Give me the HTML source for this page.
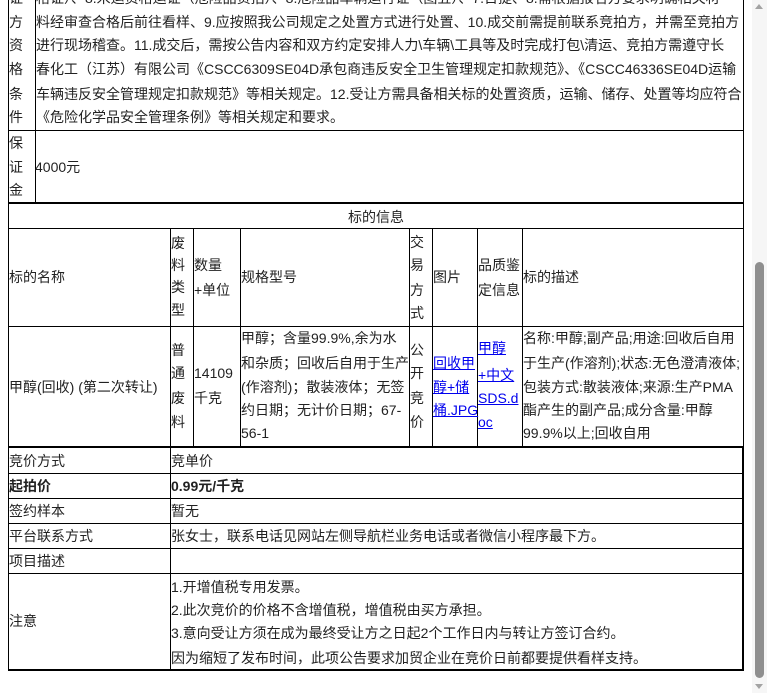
<!DOCTYPE html>
<html><head><meta charset="utf-8"><style>
body{margin:0;width:767px;height:693px;overflow:hidden;background:#fff;position:relative;font-family:"Liberation Sans","Noto Sans CJK SC",sans-serif;font-size:14px;color:#222}
.h{position:absolute;height:1px;background:#000}
.v{position:absolute;width:1px;background:#000}
.t{position:absolute;line-height:24px;white-space:nowrap}
a{color:#00e;text-decoration:underline}
</style></head><body>
<!-- top section -->
<div class="v" style="left:8px;top:0;height:229px"></div>
<div class="v" style="left:35px;top:0;height:203px"></div>
<div class="v" style="left:743px;top:0;height:670px"></div>
<div class="h" style="left:8px;top:130px;width:736px"></div>
<div class="h" style="left:8px;top:202px;width:736px;height:2px"></div>
<div class="h" style="left:8px;top:228px;width:736px"></div>
<div class="t" style="left:9px;top:-14px">证</div>
<div class="t" style="left:9px;top:10px">方</div>
<div class="t" style="left:9px;top:33px">资</div>
<div class="t" style="left:9px;top:57px">格</div>
<div class="t" style="left:9px;top:82px">条</div>
<div class="t" style="left:9px;top:105px">件</div>
<div class="t" style="left:36px;top:-14px">格证）、8.米运资格运证（危险品货拍）、8.危险品车辆运行证（图五）、7.日提、8.需根据报名方要求明确相关材</div>
<div class="t" style="left:36px;top:10px">料经审查合格后前往看样、9.应按照我公司规定之处置方式进行处置、10.成交前需提前联系竞拍方，并需至竞拍方</div>
<div class="t" style="left:36px;top:33px">进行现场稽查。11.成交后，需按公告内容和双方约定安排人力\车辆\工具等及时完成打包\清运、竞拍方需遵守长</div>
<div class="t" style="left:36px;top:57px">春化工（江苏）有限公司《CSCC6309SE04D承包商违反安全卫生管理规定扣款规范》、《CSCC46336SE04D运输</div>
<div class="t" style="left:36px;top:82px">车辆违反安全管理规定扣款规范》等相关规定。12.受让方需具备相关标的处置资质，运输、储存、处置等均应符合</div>
<div class="t" style="left:36px;top:105px">《危险化学品安全管理条例》等相关规定和要求。</div>
<div class="t" style="left:9px;top:131px">保</div>
<div class="t" style="left:9px;top:155px">证</div>
<div class="t" style="left:9px;top:178px">金</div>
<div class="t" style="left:35px;top:155px">4000元</div>
<div class="t" style="left:8px;width:736px;text-align:center;top:205px">标的信息</div>
<!-- item table -->
<div class="v" style="left:170px;top:229px;height:441px"></div>
<div class="v" style="left:193px;top:229px;height:219px"></div>
<div class="v" style="left:240px;top:229px;height:219px"></div>
<div class="v" style="left:409px;top:229px;height:219px"></div>
<div class="v" style="left:432px;top:229px;height:219px"></div>
<div class="v" style="left:477px;top:229px;height:219px"></div>
<div class="v" style="left:522px;top:229px;height:219px"></div>
<div class="v" style="left:8px;top:229px;height:442px"></div>
<div class="h" style="left:8px;top:326px;width:736px"></div>
<div class="h" style="left:8px;top:446px;width:736px;height:2px"></div>
<div class="t" style="left:9px;top:265px">标的名称</div>
<div class="t" style="left:171px;top:231px">废</div>
<div class="t" style="left:171px;top:253px">料</div>
<div class="t" style="left:171px;top:275px">类</div>
<div class="t" style="left:171px;top:298px">型</div>
<div class="t" style="left:194px;top:253px">数量</div>
<div class="t" style="left:194px;top:278px">+单位</div>
<div class="t" style="left:241px;top:265px">规格型号</div>
<div class="t" style="left:410px;top:230px">交</div>
<div class="t" style="left:410px;top:253px">易</div>
<div class="t" style="left:410px;top:278px">方</div>
<div class="t" style="left:410px;top:301px">式</div>
<div class="t" style="left:433px;top:265px">图片</div>
<div class="t" style="left:478px;top:253px">品质鉴</div>
<div class="t" style="left:478px;top:278px">定信息</div>
<div class="t" style="left:523px;top:265px">标的描述</div>
<div class="t" style="left:9px;top:375px">甲醇(回收) (第二次转让)</div>
<div class="t" style="left:171px;top:338px">普</div>
<div class="t" style="left:171px;top:361px">通</div>
<div class="t" style="left:171px;top:386px">废</div>
<div class="t" style="left:171px;top:410px">料</div>
<div class="t" style="left:194px;top:361px">14109</div>
<div class="t" style="left:194px;top:386px">千克</div>
<div class="t" style="left:241px;top:326px">甲醇；含量99.9%,余为水</div>
<div class="t" style="left:241px;top:351px">和杂质；回收后自用于生产</div>
<div class="t" style="left:241px;top:375px">(作溶剂)；散装液体；无签</div>
<div class="t" style="left:241px;top:398px">约日期；无计价日期；67-</div>
<div class="t" style="left:241px;top:421px">56-1</div>
<div class="t" style="left:410px;top:338px">公</div>
<div class="t" style="left:410px;top:361px">开</div>
<div class="t" style="left:410px;top:386px">竞</div>
<div class="t" style="left:410px;top:410px">价</div>
<div class="t" style="left:433px;top:351px"><a>回收甲</a></div>
<div class="t" style="left:433px;top:375px"><a>醇+储</a></div>
<div class="t" style="left:433px;top:398px"><a>桶.JPG</a></div>
<div class="t" style="left:478px;top:336px"><a>甲醇</a></div>
<div class="t" style="left:478px;top:363px"><a>+中文</a></div>
<div class="t" style="left:478px;top:386px"><a>SDS.d</a></div>
<div class="t" style="left:478px;top:410px"><a>oc</a></div>
<div class="t" style="left:523px;top:326px">名称:甲醇;副产品;用途:回收后自用</div>
<div class="t" style="left:523px;top:351px">于生产(作溶剂);状态:无色澄清液体;</div>
<div class="t" style="left:523px;top:375px">包装方式:散装液体;来源:生产PMA</div>
<div class="t" style="left:523px;top:398px">酯产生的副产品;成分含量:甲醇</div>
<div class="t" style="left:523px;top:421px">99.9%以上;回收自用</div>
<!-- bottom rows -->
<div class="h" style="left:8px;top:473px;width:736px"></div>
<div class="h" style="left:8px;top:498px;width:736px"></div>
<div class="h" style="left:8px;top:523px;width:736px"></div>
<div class="h" style="left:8px;top:548px;width:736px"></div>
<div class="h" style="left:8px;top:573px;width:736px"></div>
<div class="h" style="left:8px;top:669px;width:736px;height:2px"></div>
<div class="v" style="left:742px;top:447px;height:224px;width:2px"></div>
<div class="t" style="left:9px;top:449px">竞价方式</div>
<div class="t" style="left:171px;top:449px">竞单价</div>
<div class="t" style="left:9px;top:474px;font-weight:bold">起拍价</div>
<div class="t" style="left:171px;top:474px;font-weight:bold">0.99元/千克</div>
<div class="t" style="left:9px;top:499px">签约样本</div>
<div class="t" style="left:171px;top:499px">暂无</div>
<div class="t" style="left:9px;top:524px">平台联系方式</div>
<div class="t" style="left:171px;top:524px">张女士，联系电话见网站左侧导航栏业务电话或者微信小程序最下方。</div>
<div class="t" style="left:9px;top:549px">项目描述</div>
<div class="t" style="left:9px;top:609px">注意</div>
<div class="t" style="left:171px;top:575px">1.开增值税专用发票。</div>
<div class="t" style="left:171px;top:598px">2.此次竞价的价格不含增值税，增值税由买方承担。</div>
<div class="t" style="left:171px;top:621px">3.意向受让方须在成为最终受让方之日起2个工作日内与转让方签订合约。</div>
<div class="t" style="left:171px;top:646px">因为缩短了发布时间，此项公告要求加贸企业在竞价日前都要提供看样支持。</div>
<!-- scrollbar -->
<div style="position:absolute;left:752px;top:0;width:15px;height:693px;background:#f6f6f6"></div>
<div style="position:absolute;left:755px;top:4px;width:0;height:0;border-left:4px solid transparent;border-right:4px solid transparent;border-bottom:5px solid #a3a3a3"></div>
<div style="position:absolute;left:755px;top:262px;width:9px;height:416px;background:#8f8f8f;border-radius:5px"></div>
<div style="position:absolute;left:755px;top:684px;width:0;height:0;border-left:4px solid transparent;border-right:4px solid transparent;border-top:5px solid #a3a3a3"></div>
</body></html>
